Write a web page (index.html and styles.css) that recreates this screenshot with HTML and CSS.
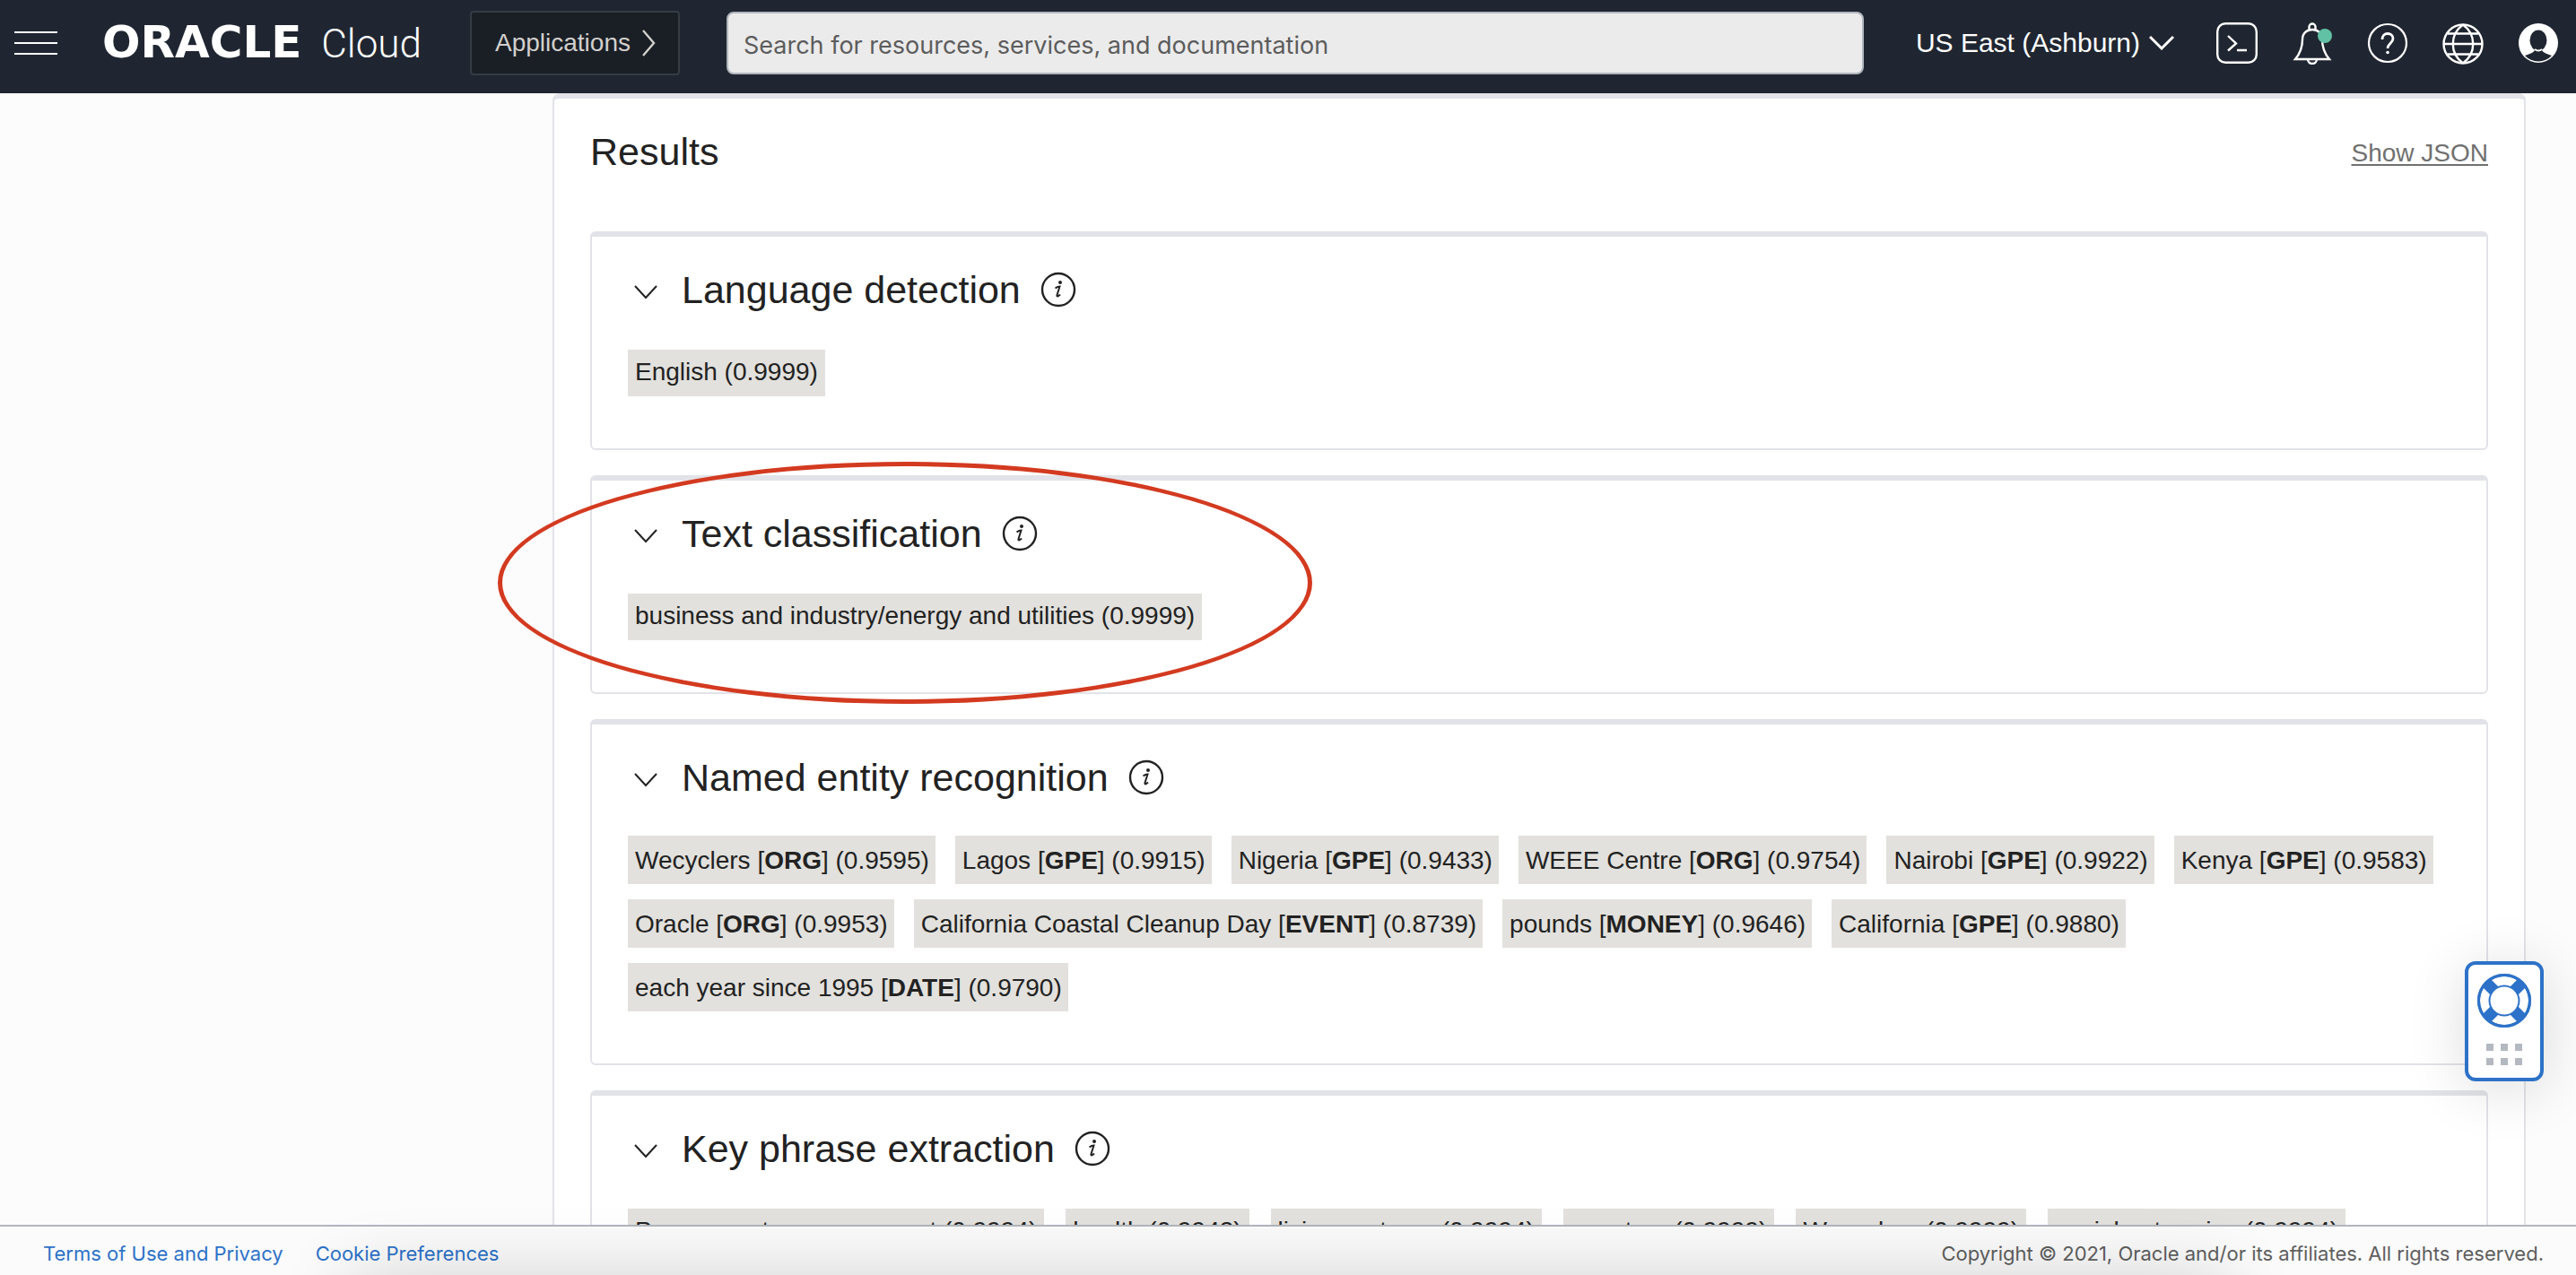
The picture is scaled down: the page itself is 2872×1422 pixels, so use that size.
FILE: index.html
```html
<!DOCTYPE html>
<html lang="en">
<head>
<meta charset="utf-8">
<title>Oracle Cloud - Text analytics</title>
<link rel="stylesheet" href="styles.css">
</head>
<body>
<svg class="sprite" aria-hidden="true">
  <symbol id="chevron" viewBox="0 0 26 16"><path d="M1 1l12 13L25 1" fill="none" stroke="currentColor" stroke-width="2"/></symbol>
  <symbol id="info" viewBox="0 0 40 40">
    <circle cx="20" cy="20" r="18" fill="none" stroke="currentColor" stroke-width="2.4"/>
    <circle cx="22" cy="12" r="2" fill="currentColor"/>
    <path d="M16.500 18.500c2-1.500 3.500-2 5-2l-3 9.500c-.5 2 1 2 3.500-.5" fill="none" stroke="currentColor" stroke-width="2"/>
  </symbol>
</svg>

<header class="topbar">
  <button class="menu-button" aria-label="Menu"><span></span><span></span><span></span></button>
  <a class="brand" href="#"><span class="brand-name">ORACLE</span><span class="brand-product">Cloud</span></a>
  <button class="apps-button">Applications
    <svg width="16" height="30" viewBox="0 0 16 30"><path d="M2 1l12 14L2 29" fill="none" stroke="currentColor" stroke-width="2.4"/></svg>
  </button>
  <input class="search" type="search" aria-label="Search" placeholder="Search for resources, services, and documentation">
  <button class="region">US East (Ashburn)
    <svg width="28" height="18" viewBox="0 0 28 18"><path d="M1 2l13 13L27 2" fill="none" stroke="currentColor" stroke-width="3"/></svg>
  </button>
  <nav class="tools" aria-label="Tools">
    <button class="tool" aria-label="Cloud Shell">
      <svg viewBox="0 0 48 48" fill="none" stroke="currentColor" stroke-width="2.400"><rect x="2.200" y="2.200" width="43.600" height="43.600" rx="9"/><path d="M14 16l9 8.500-9 8M24 32h11"/></svg>
    </button>
    <button class="tool" aria-label="Announcements">
      <svg viewBox="0 0 48 48" fill="none" stroke="currentColor" stroke-width="2.400"><path d="M20.500 9.500V6a3.500 3.500 0 0 1 7 0v3.500M5 42h38c-6-7-8-13-8-22 0-7-5-11-11-11s-11 4-11 11c0 9-2 15-8 22zM19 42a5 5 0 0 0 10 0"/><circle cx="38" cy="16" r="8" fill="#61c1a5" stroke="none"/></svg>
    </button>
    <button class="tool" aria-label="Help">
      <svg viewBox="0 0 48 48" fill="none" stroke="currentColor" stroke-width="2.200"><circle cx="24" cy="24" r="21"/><path d="M18 20c0-4 2.500-6.500 6-6.500s6 2.300 6 5.500c0 5-6 5.500-6 11" stroke-width="2.800"/><circle cx="24" cy="34.500" r="1.800" fill="currentColor" stroke="none"/></svg>
    </button>
    <button class="tool" aria-label="Language">
      <svg viewBox="0 0 48 48" fill="none" stroke="currentColor" stroke-width="2.400"><circle cx="24" cy="25" r="21.500"/><path d="M2.500 25h43M6.500 13.500h35M6.500 36.500h35M24 3.500c-15 11-15 32 0 43M24 3.500c15 11 15 32 0 43"/></svg>
    </button>
    <button class="tool" aria-label="Profile">
      <svg viewBox="0 0 48 48"><circle cx="24" cy="24" r="22" fill="currentColor"/><ellipse cx="24" cy="21" rx="9.500" ry="11.500" fill="#202631"/><path d="M9 38c4-1.500 9-2.500 11-6h8c2 3.500 7 4.500 11 6a20.500 20.500 0 0 1-30 0z" fill="#202631"/><path d="M20 31q4 3 8 0" stroke="currentColor" stroke-width="2" fill="none"/></svg>
    </button>
  </nav>
</header>

<main class="page">
  <section class="panel">
    <div class="panel-head">
      <h1 class="heading">Results</h1>
      <a class="json-link" href="#">Show JSON</a>
    </div>

    <section class="card">
      <div class="card-head">
        <button class="icon-button" aria-label="Collapse"><svg class="chevron"><use href="#chevron"/></svg></button>
        <h2 class="heading">Language detection</h2>
        <button class="icon-button" aria-label="Info"><svg class="info"><use href="#info"/></svg></button>
      </div>
      <ul class="tags"><li class="tag">English (0.9999)</li></ul>
    </section>

    <section class="card">
      <div class="card-head">
        <button class="icon-button" aria-label="Collapse"><svg class="chevron"><use href="#chevron"/></svg></button>
        <h2 class="heading">Text classification</h2>
        <button class="icon-button" aria-label="Info"><svg class="info"><use href="#info"/></svg></button>
      </div>
      <ul class="tags"><li class="tag">business and industry/energy and utilities (0.9999)</li></ul>
      <div class="callout"></div>
    </section>

    <section class="card">
      <div class="card-head">
        <button class="icon-button" aria-label="Collapse"><svg class="chevron"><use href="#chevron"/></svg></button>
        <h2 class="heading">Named entity recognition</h2>
        <button class="icon-button" aria-label="Info"><svg class="info"><use href="#info"/></svg></button>
      </div>
      <ul class="tags tags-entities">
        <li class="tag">Wecyclers [<b>ORG</b>] (0.9595)</li>
        <li class="tag">Lagos [<b>GPE</b>] (0.9915)</li>
        <li class="tag">Nigeria [<b>GPE</b>] (0.9433)</li>
        <li class="tag">WEEE Centre [<b>ORG</b>] (0.9754)</li>
        <li class="tag">Nairobi [<b>GPE</b>] (0.9922)</li>
        <li class="tag">Kenya [<b>GPE</b>] (0.9583)</li>
        <li class="tag">Oracle [<b>ORG</b>] (0.9953)</li>
        <li class="tag">California Coastal Cleanup Day [<b>EVENT</b>] (0.8739)</li>
        <li class="tag">pounds [<b>MONEY</b>] (0.9646)</li>
        <li class="tag">California [<b>GPE</b>] (0.9880)</li>
        <li class="tag">each year since 1995 [<b>DATE</b>] (0.9790)</li>
      </ul>
    </section>

    <section class="card">
      <div class="card-head">
        <button class="icon-button" aria-label="Collapse"><svg class="chevron"><use href="#chevron"/></svg></button>
        <h2 class="heading">Key phrase extraction</h2>
        <button class="icon-button" aria-label="Info"><svg class="info"><use href="#info"/></svg></button>
      </div>
      <ul class="tags">
        <li class="tag">Proper waste management (0.9994)</li>
        <li class="tag">health (0.9943)</li>
        <li class="tag">living systems (0.9994)</li>
        <li class="tag">counters (0.9999)</li>
        <li class="tag">Wecyclers (0.9999)</li>
        <li class="tag">social enterprise (0.9994)</li>
      </ul>
    </section>
  </section>
</main>

<footer class="footer">
  <a href="#">Terms of Use and Privacy</a>
  <a href="#">Cookie Preferences</a>
  <p class="copyright">Copyright © 2021, Oracle and/or its affiliates. All rights reserved.</p>
</footer>

<button class="support" aria-label="Support">
  <svg width="60" height="60" viewBox="0 0 60 60" fill="none">
    <circle cx="30" cy="30" r="22" stroke="#2d72c8" stroke-width="13"/>
    <circle cx="30" cy="30" r="28.500" stroke="#2d72c8" stroke-width="3"/>
    <g fill="#fff">
      <path id="gap" d="M16 7Q30 -1 44 7L37 14Q30 11 23 14z"/>
      <use href="#gap" transform="rotate(90 30 30)"/>
      <use href="#gap" transform="rotate(180 30 30)"/>
      <use href="#gap" transform="rotate(270 30 30)"/>
    </g>
    <circle cx="30" cy="30" r="28.500" stroke="#2d72c8" stroke-width="3"/>
  </svg>
  <span class="grip"><i></i><i></i><i></i><i></i><i></i><i></i></span>
</button>
</body>
</html>
```
FILE: styles.css
```css
* { box-sizing: border-box; }

body {
  margin: 0;
  height: 100vh;
  display: flex;
  flex-direction: column;
  overflow: hidden;
  background: #fcfcfc;
  color: #222;
  font-family: "Liberation Sans", Arial, sans-serif;
  font-size: 28px;
}

button {
  font: inherit;
  color: inherit;
  background: none;
  border: 0;
  padding: 0;
  cursor: pointer;
}

svg { display: block; flex: none; }
.sprite { position: absolute; width: 0; height: 0; }

/* Top bar */
.topbar {
  flex: none;
  display: flex;
  align-items: center;
  height: 104px;
  padding: 0 18px 8px 16px;
  background: #202631;
  color: #fff;
}

.menu-button {
  display: grid;
  gap: 10px;
  width: 48px;
  margin-right: 50px;
}
.menu-button span { height: 2px; background: #fff; }

.brand {
  display: flex;
  align-items: baseline;
  justify-content: space-between;
  width: 356px;
  margin-right: 54px;
  color: #fff;
  text-decoration: none;
  line-height: 52px;
}
.brand-name { font: bold 50px/52px "DejaVu Sans", sans-serif; }
.brand-product { font: 300 44px/52px Roboto, sans-serif; }

.apps-button {
  display: flex;
  align-items: center;
  gap: 12px;
  height: 72px;
  padding: 0 25px 0 26px;
  margin-right: 52px;
  border: 2px solid #353c44;
  border-radius: 4px;
  background: #1a1f26;
  color: #d2d0cd;
}

.search {
  flex: 1;
  min-width: 0;
  height: 70px;
  padding: 4px 17px 0;
  border: 2px solid #b1b6be;
  border-radius: 8px;
  background: #ebebeb;
  font: 27px Inter, sans-serif;
}
.search::placeholder { color: #5c5c5c; opacity: 1; }

.region {
  display: flex;
  align-items: center;
  gap: 10px;
  margin: 0 46px 0 58px;
  font-size: 30px;
}

.tools { display: flex; gap: 36px; }
.tool, .tool svg { width: 48px; height: 48px; }

/* Results */
.page {
  flex: 1;
  min-height: 0;
  overflow: hidden;
  padding: 0 56px 0 616px;
}

.panel {
  padding: 0 40px 40px;
  border: 2px solid #e2e3e8;
  border-top-width: 6px;
  border-radius: 8px;
  background: #fff;
}

.panel-head {
  display: flex;
  align-items: center;
  justify-content: space-between;
  height: 50px;
  margin: 34px 0 64px;
}

.heading {
  margin: 0;
  font-size: 43px;
  font-weight: 400;
  line-height: 50px;
}

.json-link {
  padding-top: 3px;
  color: #707070;
  text-decoration-thickness: 2px;
  text-underline-offset: 3px;
}

.card {
  position: relative;
  margin-bottom: 28px;
  padding: 33px 40px 58px;
  border: 2px solid #e2e3e8;
  border-top-width: 6px;
  border-radius: 6px;
}

.card-head {
  display: flex;
  align-items: center;
  height: 52px;
  padding-left: 7px;
}
.card-head .heading { margin: 0 22px 0 27px; }
.chevron { width: 26px; height: 16px; margin-top: 5px; }
.info { width: 40px; height: 40px; }

.tags {
  display: flex;
  flex-wrap: wrap;
  gap: 17px 24px;
  margin: 41px 0 0;
  padding: 0;
  list-style: none;
}
.tag {
  padding: 1px 8px 3px;
  background: #e2e1dd;
  line-height: 48px;
}
.tags-entities { margin-top: 39px; column-gap: 22px; }
.tags-entities .tag { padding: 1px 7px 0 8px; line-height: 53px; }

.callout {
  position: absolute;
  left: -105px;
  top: -21px;
  width: 908px;
  height: 270px;
  border: 5px solid #d33a20;
  border-radius: 50%;
  pointer-events: none;
}

/* Footer */
.footer {
  flex: none;
  display: flex;
  align-items: center;
  gap: 36px;
  height: 56px;
  padding: 6px 36px 0 48px;
  border-top: 2px solid #b1b6be;
  background: #fbfbfb;
  font: 22px/28px Inter, sans-serif;
}
.footer a { color: #2d72c8; text-decoration: none; }
.footer::after {
  content: "";
  position: fixed;
  left: 390px;
  right: 390px;
  top: 100%;
  height: 100px;
  box-shadow: 0 0 80px rgba(0, 0, 0, .16);
  pointer-events: none;
}
.copyright { margin: 0 0 0 auto; color: #5f5f5f; }

/* Support widget */
.support {
  position: fixed;
  right: 36px;
  bottom: 216px;
  display: grid;
  justify-items: center;
  align-content: start;
  gap: 18px;
  width: 88px;
  height: 134px;
  padding-top: 10px;
  border: 4px solid #2d72c8;
  border-radius: 12px;
  background: #fff;
  box-shadow: 0 8px 64px rgba(0, 0, 0, .14);
}
.grip { display: grid; grid-template-columns: repeat(3, 8px); gap: 8px; }
.grip i { height: 8px; background: #b4b8c0; }
```
